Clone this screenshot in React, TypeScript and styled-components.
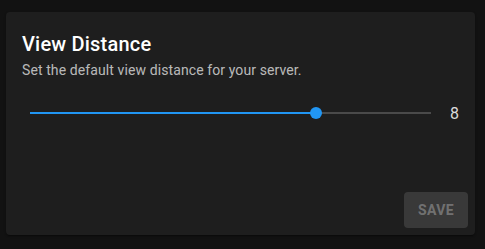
import React, { useState } from "react";
import styled, { createGlobalStyle } from "styled-components";

const GlobalStyle = createGlobalStyle`
  html, body {
    margin: 0;
    padding: 0;
    background-color: #121212;
    font-family: Roboto, "Liberation Sans", Arial, sans-serif;
  }
`;

const Page = styled.div`
  width: 485px;
  height: 249px;
  padding: 12px 10px 0 6px;
  box-sizing: border-box;
`;

const Card = styled.div`
  height: 223px;
  background-color: #1e1e1e;
  border-radius: 4px;
  display: flex;
  flex-direction: column;
  box-shadow: 0 2px 1px -1px rgba(0, 0, 0, 0.2), 0 1px 1px 0 rgba(0, 0, 0, 0.14),
    0 1px 3px 0 rgba(0, 0, 0, 0.12);
`;

const CardContent = styled.div`
  padding: 16px 16px 0 16px;
  flex: 1;
`;

const Title = styled.h2`
  margin: 0;
  font-size: 20px;
  font-weight: 500;
  line-height: 32px;
  letter-spacing: 0.2px;
  color: #ffffff;
`;

const Subtitle = styled.p`
  margin: 0;
  font-size: 14px;
  line-height: 20px;
  letter-spacing: 0.1px;
  color: rgba(255, 255, 255, 0.7);
`;

const SliderRow = styled.div`
  display: flex;
  align-items: center;
  height: 26px;
  margin-top: 20px;
  padding-left: 8px;
`;

const SliderRoot = styled.div`
  position: relative;
  flex: 1;
  height: 26px;
  cursor: pointer;
`;

const Rail = styled.div`
  position: absolute;
  left: 0;
  right: 0;
  top: 12px;
  height: 2px;
  background-color: #4a4a4a;
`;

const Track = styled.div`
  position: absolute;
  left: 0;
  top: 12px;
  height: 2px;
  background-color: #2196f3;
`;

const Thumb = styled.div`
  position: absolute;
  top: 7px;
  width: 12px;
  height: 12px;
  margin-left: -6px;
  border-radius: 50%;
  background-color: #2196f3;
`;

const Value = styled.span`
  flex: 0 0 28px;
  text-align: right;
  font-size: 16px;
  color: rgba(255, 255, 255, 0.85);
`;

const CardActions = styled.div`
  display: flex;
  justify-content: flex-end;
  padding: 8px 7px 7px 8px;
`;

const SaveButton = styled.button`
  width: 64px;
  height: 36px;
  padding: 0;
  border: none;
  border-radius: 4px;
  background-color: rgba(255, 255, 255, 0.12);
  color: rgba(255, 255, 255, 0.3);
  font-family: inherit;
  font-size: 14px;
  font-weight: 700;
  letter-spacing: 0.4px;
  text-transform: uppercase;
`;

const MIN = 3;
const MAX = 10;

const ViewDistance = () => {
  const [distance, setDistance] = useState(8);
  const percent = ((distance - MIN) / (MAX - MIN)) * 100;

  const handleClick = (e: React.MouseEvent<HTMLDivElement>) => {
    const rect = e.currentTarget.getBoundingClientRect();
    const ratio = (e.clientX - rect.left) / rect.width;
    setDistance(Math.round(MIN + ratio * (MAX - MIN)));
  };

  return (
    <Card>
      <CardContent>
        <Title>View Distance</Title>
        <Subtitle>Set the default view distance for your server.</Subtitle>
        <SliderRow>
          <SliderRoot onClick={handleClick}>
            <Rail />
            <Track style={{ width: `${percent}%` }} />
            <Thumb style={{ left: `${percent}%` }} />
          </SliderRoot>
          <Value>{distance}</Value>
        </SliderRow>
      </CardContent>
      <CardActions>
        <SaveButton disabled>Save</SaveButton>
      </CardActions>
    </Card>
  );
};

export default function App() {
  return (
    <>
      <GlobalStyle />
      <Page>
        <ViewDistance />
      </Page>
    </>
  );
}
